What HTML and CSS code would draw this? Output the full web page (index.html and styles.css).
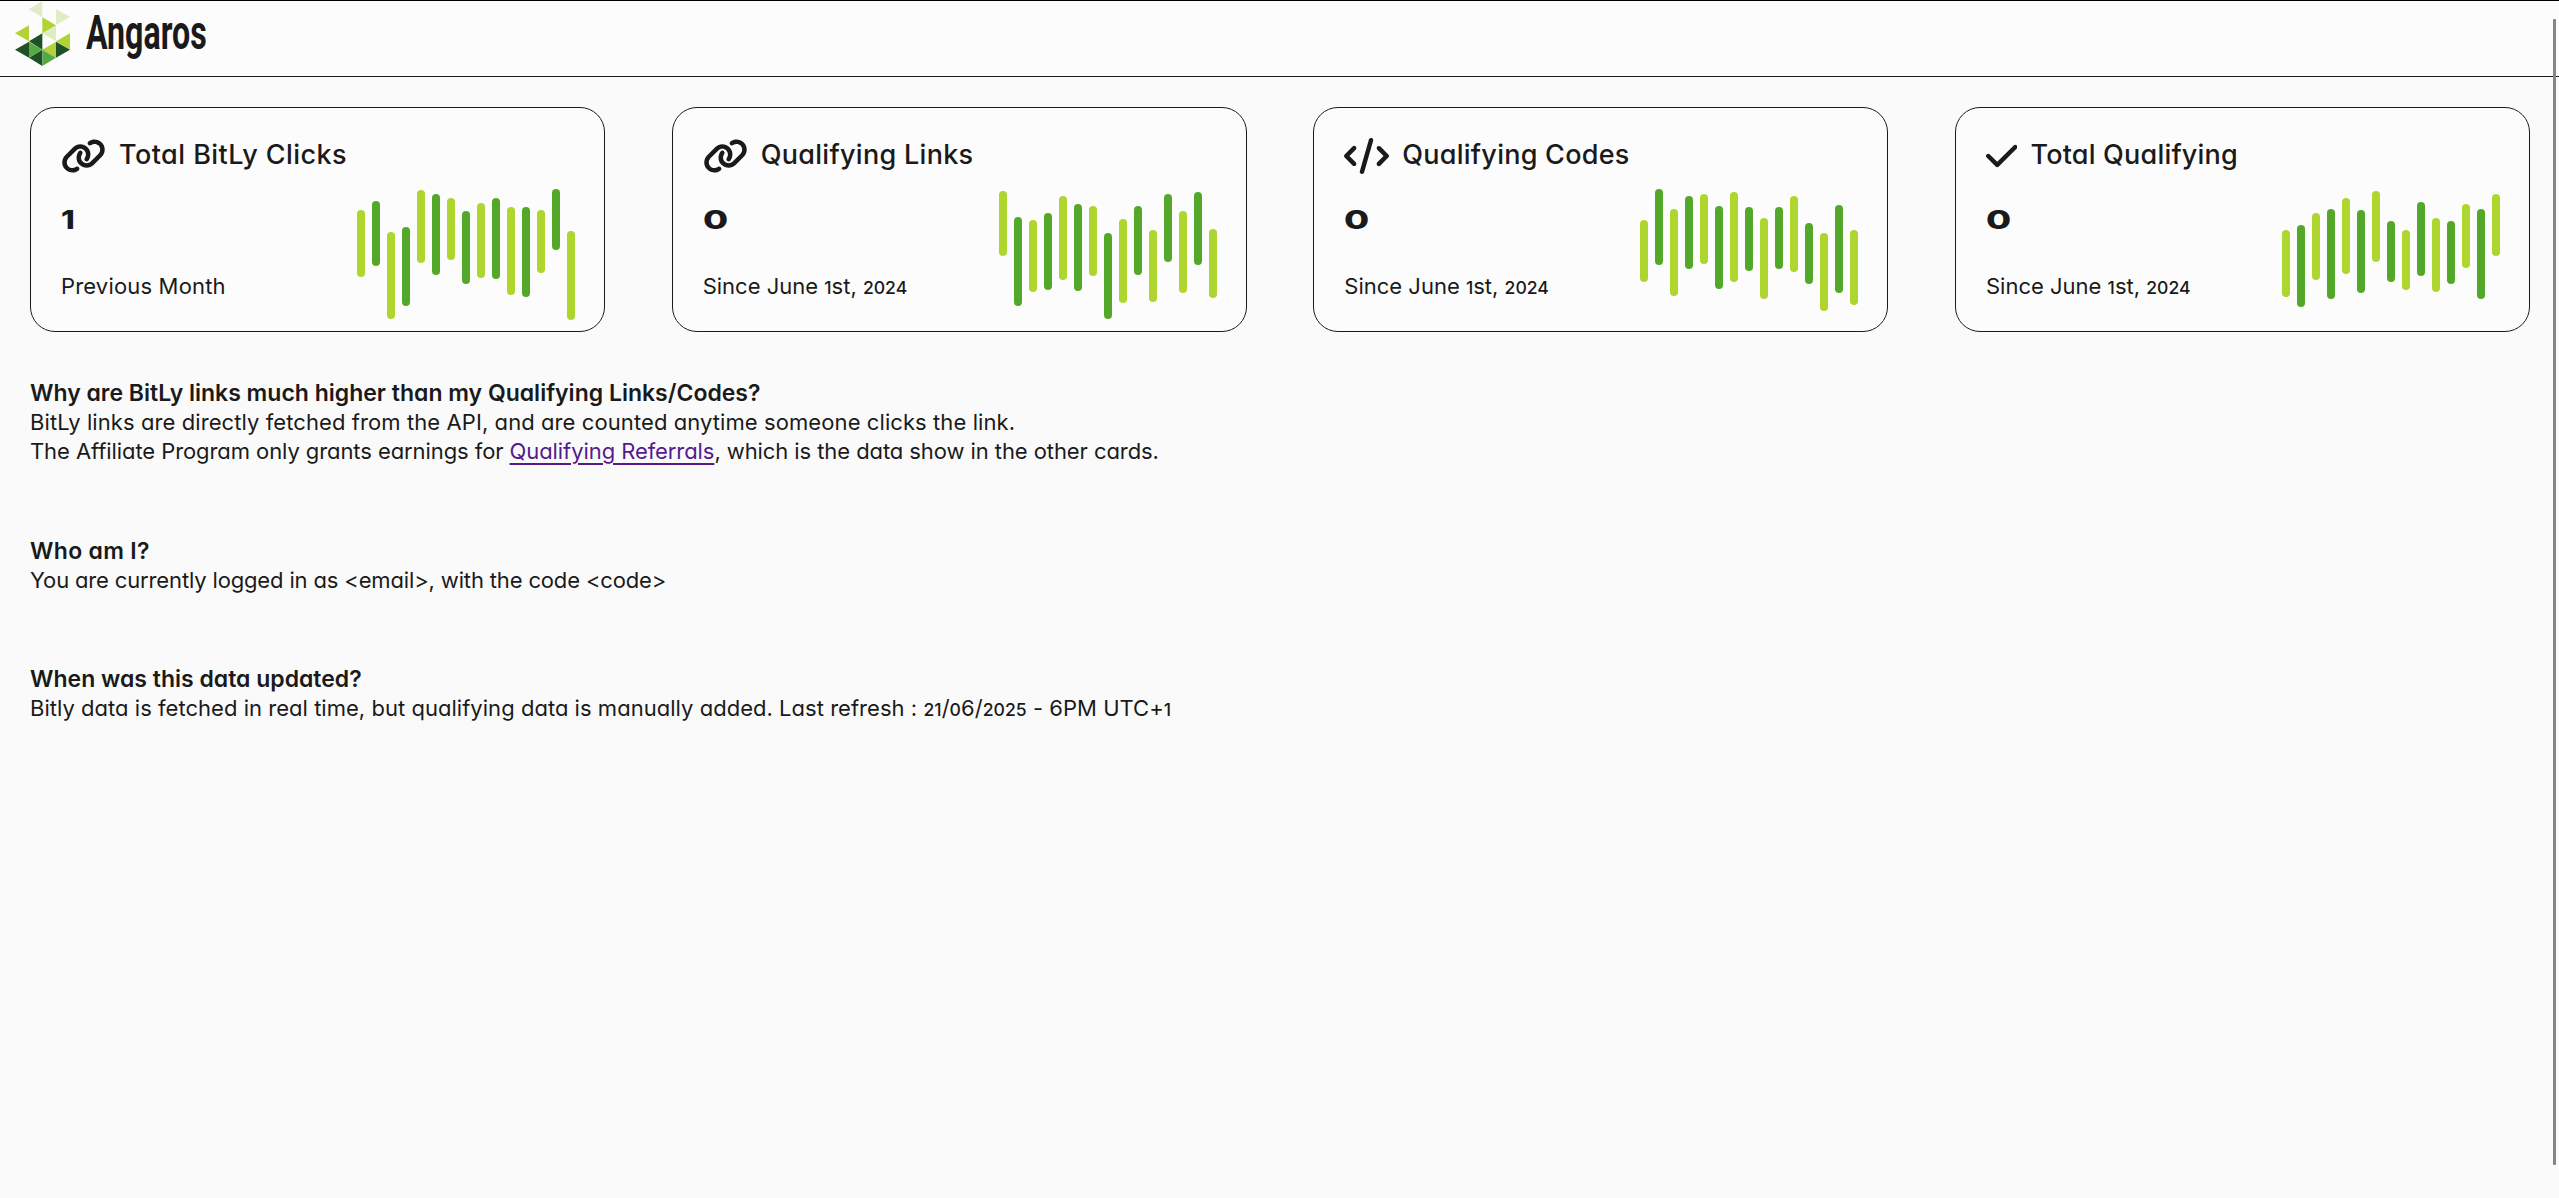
FILE: index.html
```html
<!DOCTYPE html>
<html lang="en">
<head>
<meta charset="utf-8">
<title>Angaros</title>
<link rel="stylesheet" href="styles.css">
</head>
<body>
<svg width="0" height="0" class="defs">
  <symbol id="link" viewBox="0 0 640 512"><path d="M579.8 267.7c56.5-56.5 56.5-148 0-204.5c-50-50-128.800-56.500-186.300-15.400l-1.600 1.100c-14.400 10.300-17.700 30.300-7.400 44.600s30.300 17.700 44.600 7.400l1.600-1.100c32.100-22.900 76-19.300 103.800 8.600c31.500 31.500 31.500 82.500 0 114L422.300 334.800c-31.500 31.500-82.500 31.500-114 0c-27.900-27.900-31.500-71.800-8.600-103.800l1.100-1.600c10.300-14.400 6.900-34.400-7.400-44.600s-34.400-6.900-44.600 7.400l-1.100 1.600C206.500 251.200 213 330 263 380c56.500 56.500 148 56.500 204.500 0L579.800 267.700zM60.200 244.300c-56.500 56.500-56.500 148 0 204.500c50 50 128.800 56.500 186.300 15.400l1.600-1.100c14.400-10.300 17.700-30.300 7.400-44.600s-30.300-17.700-44.600-7.400l-1.600 1.100c-32.100 22.900-76 19.300-103.800-8.600C74 372 74 321 105.500 289.500L217.700 177.200c31.500-31.500 82.500-31.500 114 0c27.900 27.900 31.500 71.800 8.600 103.900l-1.100 1.600c-10.300 14.400-6.900 34.400 7.400 44.600s34.400 6.900 44.600-7.400l1.100-1.600C433.500 260.800 427 182 377 132c-56.500-56.500-148-56.500-204.500 0L60.200 244.300z"/></symbol>
  <symbol id="code" viewBox="0 0 640 512"><path d="M392.800 1.200c-17-4.900-34.700 5-39.600 22l-128 448c-4.900 17 5 34.700 22 39.600s34.700-5 39.600-22l128-448c4.900-17-5-34.700-22-39.600zm80.600 120.100c-12.500 12.500-12.500 32.800 0 45.300L562.700 256l-89.400 89.400c-12.500 12.500-12.500 32.800 0 45.300s32.800 12.500 45.300 0l112-112c12.500-12.500 12.500-32.800 0-45.300l-112-112c-12.500-12.500-32.800-12.500-45.300 0zm-306.700 0c-12.500-12.500-32.800-12.500-45.300 0l-112 112c-12.500 12.500-12.500 32.800 0 45.300l112 112c12.500 12.500 32.800 12.500 45.300 0s12.500-32.800 0-45.300L77.300 256l89.400-89.400c12.500-12.500 12.500-32.800 0-45.300z"/></symbol>
  <symbol id="check" viewBox="0 0 448 512"><path d="M438.600 105.400c12.500 12.500 12.500 32.800 0 45.300l-256 256c-12.500 12.500-32.800 12.500-45.300 0l-128-128c-12.500-12.500-12.500-32.800 0-45.300s32.800-12.500 45.300 0L160 338.700 393.400 105.400c12.500-12.500 32.800-12.500 45.300 0z"/></symbol>
</svg>
<header class="topbar">
  <svg class="logo" viewBox="45 3 165 195" aria-hidden="true">
    <path fill="#dfedc6" d="M86 28 127 4v48zM168 27l42 24-42 24zM127 100l41-24v48z"/>
    <path fill="#b2d235" d="M127 52l41 24-41 24zM45 100l42-24v48zM127 149l41-24v48zM168 124l42-24v49z"/>
    <path fill="#1f5127" d="M87 124l40-24v49zM45 149l42-24v48zM168 125l42 24-42 24zM87 173l40-24v49z"/>
    <path fill="#56a946" d="M87 125l40 24-40 24zM127 149l41 24-41 25z"/>
  </svg>
  <span class="brand">Angaros</span>
</header>
<main>
  <section class="cards">
    <article class="card">
      <h2 class="title"><svg class="icon"><use href="#link"/></svg><span class="t1">Total BitLy Clicks</span></h2>
      <div class="body"><div class="facts"><strong class="value one">1</strong><span class="note n1">Previous Month</span></div><svg class="chart" data-bars="110-177 101-166 132-219 127-206 90-163 94-175 98-160 111-184 103-178 98-179 107-195 107-197 110-173 89-150 131-220"></svg></div>
    </article>
    <article class="card">
      <h2 class="title"><svg class="icon"><use href="#link"/></svg><span class="t2">Qualifying Links</span></h2>
      <div class="body"><div class="facts"><strong class="value">0</strong><span class="note">Since June <span class="os">1</span>st, <span class="os">2024</span></span></div><svg class="chart" data-bars="91-156 117-206 120-192 113-190 96-180 104-191 106-176 133-219 119-203 106-175 130-202 94-162 111-193 92-165 129-198"></svg></div>
    </article>
    <article class="card">
      <h2 class="title"><svg class="icon"><use href="#code"/></svg><span class="t3">Qualifying Codes</span></h2>
      <div class="body"><div class="facts"><strong class="value">0</strong><span class="note">Since June <span class="os">1</span>st, <span class="os">2024</span></span></div><svg class="chart" data-bars="120-182 89-165 109-196 96-169 94-164 106-189 92-182 107-171 118-199 107-169 96-172 123-184 133-211 105-193 130-205"></svg></div>
    </article>
    <article class="card">
      <h2 class="title"><svg class="icon check"><use href="#check"/></svg><span class="t4">Total Qualifying</span></h2>
      <div class="body"><div class="facts"><strong class="value">0</strong><span class="note">Since June <span class="os">1</span>st, <span class="os">2024</span></span></div><svg class="chart" data-bars="130-197 125-207 113-180 109-199 98-174 110-193 91-162 121-182 130-190 102-176 118-192 121-184 104-168 109-199 94-156"></svg></div>
    </article>
  </section>
  <section class="faq">
    <h3 class="q1">Why are BitLy links much higher than my Qualifying Links/Codes?</h3>
    <p class="a1">BitLy links are directly fetched from the API, and are counted anytime someone clicks the link.</p>
    <p class="a2">The Affiliate Program only grants earnings for <a href="#">Qualifying Referrals</a>, which is the data show in the other cards.</p>
  </section>
  <section class="faq">
    <h3 class="q2">Who am I?</h3>
    <p class="a3">You are currently logged in as &lt;email&gt;, with the code &lt;code&gt;</p>
  </section>
  <section class="faq">
    <h3 class="q3">When was this data updated?</h3>
    <p class="a4">Bitly data is fetched in real time, but qualifying data is manually added. Last refresh : <span class="os">21</span>/<span class="os">0</span>6/<span class="os">2025</span> - 6PM UTC+<span class="os">1</span></p>
  </section>
</main>
<div class="scroll"></div>
<script src="charts.js"></script>
</body>
</html>
```
FILE: charts.js
```js
// Each pair is the top and bottom of one rounded bar.
document.querySelectorAll('.chart').forEach(function (svg) {
  svg.setAttribute('viewBox', '0 88 218 133');
  svg.dataset.bars.split(' ').forEach(function (pair, i) {
    var ends = pair.split('-').map(Number);
    var r = document.createElementNS('http://www.w3.org/2000/svg', 'rect');
    r.setAttribute('x', i * 15);
    r.setAttribute('y', ends[0]);
    r.setAttribute('width', 8);
    r.setAttribute('height', ends[1] - ends[0]);
    r.setAttribute('rx', 4);
    r.setAttribute('fill', i % 2 ? '#54a829' : '#afd52f');
    svg.appendChild(r);
  });
});
```
FILE: styles.css
```css
* { box-sizing: border-box; }
body { margin: 0; height: 1198px; overflow: hidden; background: #fafafa; color: #1a1a1a; font-family: Inter, sans-serif; font-feature-settings: "cv11"; font-size: 22px; line-height: 29px; }
h2, h3, p { margin: 0; }
.defs { display: none; }
.topbar { height: 77px; padding: 0 0 10px 15px; display: flex; align-items: flex-start; border-top: 1px solid #000; border-bottom: 1px solid #1a1a1a; background: #fcfcfc; }
.logo { width: 55px; height: 65px; }
.brand { margin-left: 16px; font: bold 48px/64px Roboto, sans-serif; transform: scaleX(.67); transform-origin: left; }
main { width: 2559px; padding: 30px 29px 0 30px; }
.cards { display: flex; justify-content: space-between; margin-bottom: 47px; }
.card { width: 575px; height: 225px; padding: 30px 29px 10px 30px; border: 1px solid #1a1a1a; border-radius: 25px; background: #fcfcfc; display: flex; flex-direction: column; }
.title { display: flex; align-items: center; height: 36px; font-size: 27px; font-weight: 500; line-height: 34px; white-space: nowrap; }
.title span { margin: -2px 0 0 13px; }
.t1 { letter-spacing: .45px; }
.t2 { letter-spacing: .3px; }
.t3 { letter-spacing: .25px; }
.t4 { letter-spacing: .2px; }
.icon { flex: none; width: 45px; height: 36px; fill: currentColor; }
.check { width: 31.5px; }
.body { flex: 1; display: flex; justify-content: space-between; align-items: flex-end; }
.facts { align-self: stretch; display: flex; flex-direction: column; align-items: flex-start; justify-content: space-between; padding: 28px 0 20px; }
.value { font-size: 26px; line-height: 36px; font-weight: 800; transform: scaleX(1.4); transform-origin: left; }
.one { transform: scaleX(1.2); }
.note { white-space: nowrap; }
.n1 { letter-spacing: .17px; }
.os { font-size: .8em; font-weight: 500; line-height: 0; }
.chart { width: 218px; height: 133px; }
.faq { margin-bottom: 70.5px; white-space: nowrap; }
.faq h3 { font-size: 23px; font-weight: 600; }
.q2 { letter-spacing: .3px; }
.a1 { letter-spacing: .085px; }
.a2 { letter-spacing: -.08px; }
.a3 { letter-spacing: -.15px; }
.a4 { letter-spacing: .03px; }
a { color: #551a8b; text-underline-offset: 4px; }
.scroll { position: absolute; left: 2553px; top: 19px; width: 3px; height: 1146px; border-radius: 1px; background: #858585; }
```
